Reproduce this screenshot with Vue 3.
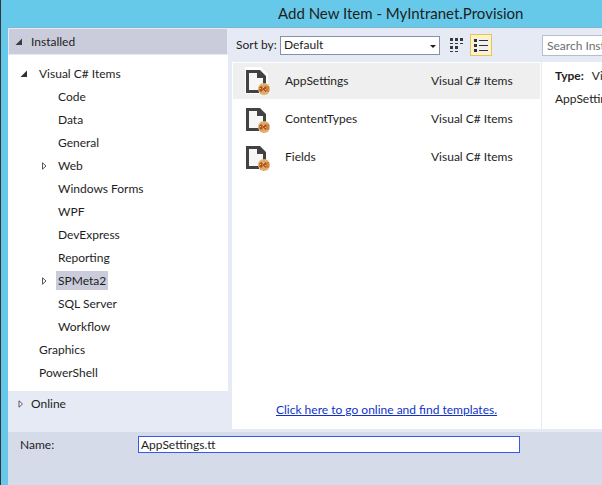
<script setup>
import { ref } from 'vue'

const categories = [
  { name: 'Visual C# Items', level: 1, state: 'open' },
  { name: 'Code', level: 2 },
  { name: 'Data', level: 2 },
  { name: 'General', level: 2 },
  { name: 'Web', level: 2, state: 'closed' },
  { name: 'Windows Forms', level: 2 },
  { name: 'WPF', level: 2 },
  { name: 'DevExpress', level: 2 },
  { name: 'Reporting', level: 2 },
  { name: 'SPMeta2', level: 2, state: 'closed' },
  { name: 'SQL Server', level: 2 },
  { name: 'Workflow', level: 2 },
  { name: 'Graphics', level: 1 },
  { name: 'PowerShell', level: 1 },
]
const templates = ['AppSettings', 'ContentTypes', 'Fields']

const category = ref('SPMeta2')
const template = ref('AppSettings')
const sort = ref('Default')
const search = ref('')
const fileName = ref('AppSettings.tt')
</script>

<template>
  <div class="dialog">
    <header class="title"><h1>Add New Item - MyIntranet.Provision</h1></header>

    <main class="body">
      <nav class="side">
        <button class="group installed" type="button">
          <svg class="arrow" width="8" height="8" viewBox="0 0 8 8"><path d="M7 0.5V7H0.5Z" fill="#3c3c40" /></svg>
          <span>Installed</span>
        </button>
        <ul class="tree">
          <li v-for="c in categories" :key="c.name" :class="'level' + c.level">
            <span class="toggle">
              <svg v-if="c.state === 'open'" width="8" height="8" viewBox="0 0 8 8"><path d="M7 0.5V7H0.5Z" fill="#303034" /></svg>
              <svg v-else-if="c.state === 'closed'" width="8" height="8" viewBox="0 0 8 8"><path d="M3.5 0.8V7.2L7 4Z" fill="#fff" stroke="#55555a" /></svg>
            </span>
            <button type="button" class="node" :class="{ selected: c.name === category }" @click="category = c.name">{{ c.name }}</button>
          </li>
        </ul>
        <button class="group online" type="button">
          <svg class="arrow" width="8" height="8" viewBox="0 0 8 8"><path d="M4 0.8V7.2L7.5 4Z" fill="#fff" stroke="#55555a" /></svg>
          <span>Online</span>
        </button>
      </nav>

      <section class="content">
        <div class="toolbar">
          <div class="sorting">
            <label for="sort">Sort by:</label>
            <span class="combo">
              <select id="sort" v-model="sort">
                <option>Default</option>
                <option>Name Ascending</option>
                <option>Name Descending</option>
              </select>
              <svg class="caret" width="6" height="3" viewBox="0 0 6 3"><path d="M0 0H6L3 3Z" fill="#1e1e1e" /></svg>
            </span>
            <button type="button" class="view" aria-label="Small icons">
              <svg width="14" height="14" viewBox="0 0 14 14" fill="#38383c" shape-rendering="crispEdges">
                <path d="M0 0h3v3h-3zM5 0h3v3h-3zM10 0h3v3h-3zM0 5h3v1h-3zM5 5h3v1h-3zM10 5h3v1h-3zM0 8h3v3h-3zM5 8h3v3h-3zM0 13h3v1h-3zM5 13h3v1h-3z" />
              </svg>
            </button>
            <button type="button" class="view active" aria-label="Medium icons">
              <svg width="16" height="15" viewBox="0 0 16 15" shape-rendering="crispEdges">
                <path d="M0 0h16v15h-16z" fill="#f1f0ec" />
                <path d="M1 1h3v3h-3zM6 2h9v1h-9zM1 6h3v3h-3zM6 7h9v1h-9zM1 11h3v3h-3zM6 12h9v1h-9z" fill="#303034" />
              </svg>
            </button>
          </div>
          <input v-model="search" class="search" type="text" aria-label="Search" placeholder="Search Installed Templates (Ctrl+E)" />
        </div>

        <div class="panes">
          <div class="list">
            <ul class="items">
              <li v-for="t in templates" :key="t">
                <button type="button" class="item" :class="{ selected: t === template }" @click="template = t">
                  <svg width="26" height="28" viewBox="0 0 26 28">
                    <path d="M0 0H16L23 7V27H0Z" fill="#fff" />
                    <path d="M3 5H13V12H19V24H3Z" fill="#f6f6f6" />
                    <path d="M1 3H15L21 9V17H18V11H12V6H4V23H14V26H1Z" fill="#424242" />
                    <circle cx="19" cy="22" r="6" fill="#dfa865" />
                    <circle cx="19" cy="22" r="5" fill="none" stroke="#efcf9b" stroke-dasharray="1 2" />
                    <path d="M15 20h2v4h-2zM18 22l3-2.500v5z" fill="#b65b24" stroke="#a84c1c" />
                    <path d="M15 21h1v1h-1zM18 20h1v1h-1zM20 22h1v1h-1z" fill="#efbd78" />
                    <path d="M23 19v6" stroke="#b65b24" />
                  </svg>
                  <span class="name">{{ t }}</span>
                  <span class="kind">Visual C# Items</span>
                </button>
              </li>
            </ul>
            <a class="more" href="#online">Click here to go online and find templates.</a>
          </div>
          <aside class="details">
            <p><b>Type:</b>Visual C# Items</p>
            <p>AppSettings</p>
          </aside>
        </div>
      </section>
    </main>

    <footer class="footer">
      <label for="name">Name:</label>
      <input id="name" v-model="fileName" type="text" />
    </footer>
  </div>
</template>

<style>
body {
  margin: 0;
  overflow: hidden;
}
</style>

<style scoped>
* {
  box-sizing: border-box;
}
.dialog {
  display: flex;
  flex-direction: column;
  min-height: 100vh;
  overflow: hidden;
  border-left: 1px solid #35353b;
  padding-left: 7px;
  background: #66c9ea;
  color: #1e1e1e;
  font: 12px/16px Lato, "Open Sans", sans-serif;
  white-space: nowrap;
}
button,
input,
select {
  margin: 0;
  border: 0;
  padding: 0;
  border-radius: 0;
  background: none;
  color: inherit;
  font: inherit;
  outline: none;
}
svg {
  display: block;
  flex: none;
}
ul {
  margin: 0;
  padding: 0;
  list-style: none;
}
.title {
  height: 28px;
  padding-left: 270px;
  border-bottom: 1px solid #7fb4d2;
}
h1 {
  margin: 0;
  font-size: 15px;
  font-weight: 400;
  line-height: 26px;
}
.body {
  display: grid;
  grid-template-columns: 220px minmax(0, 1fr);
  flex: 1;
  background: #e6eaf5;
}
.side {
  display: flex;
  flex-direction: column;
}
.group {
  display: flex;
  align-items: center;
  gap: 8px;
  text-align: left;
}
.installed {
  height: 27px;
  padding-left: 6px;
  border: 1px solid #e6eaf5;
  background: #cbccdb;
}
.online {
  height: 26px;
  padding-left: 7px;
}
.tree {
  padding: 7px 0;
  background: #fff;
}
.tree li {
  display: flex;
  align-items: center;
  height: 23px;
}
.level1 {
  padding-left: 12px;
}
.level2 {
  padding-left: 31px;
}
.toggle {
  width: 17px;
}
.node {
  height: 19px;
  padding: 0 2px;
}
.node.selected {
  background: #cbccdb;
}
.content {
  display: flex;
  flex-direction: column;
  padding: 0 0 3px 4px;
}
.toolbar {
  display: grid;
  grid-template-columns: 310px minmax(0, 1fr);
  align-items: center;
  height: 34px;
}
.sorting {
  display: flex;
  align-items: center;
  padding-left: 4px;
}
.sorting label {
  width: 44px;
}
.combo {
  display: flex;
  position: relative;
  width: 160px;
}
.combo select {
  width: 100%;
  height: 19px;
  padding-left: 3px;
  border: 1px solid #8591a9;
  background: #fff;
  appearance: none;
}
.caret {
  position: absolute;
  top: 9px;
  right: 4px;
  pointer-events: none;
}
.view {
  display: grid;
  place-items: center;
  width: 22px;
  height: 22px;
  margin-left: 6px;
}
.view.active {
  margin-left: 2px;
  border: 1px solid #e5c365;
  background: #fff3bc;
}
.search {
  width: 240px;
  height: 21px;
  padding: 0 4px;
  border: 1px solid #b6bdcd;
  background: #fff;
}
.search::placeholder {
  color: #6d6d70;
  opacity: 1;
}
.panes {
  display: grid;
  grid-template-columns: 310px minmax(0, 1fr);
  flex: 1;
}
.list {
  display: flex;
  flex-direction: column;
  align-items: center;
  justify-content: space-between;
  padding: 1px 1px 11px;
  border-right: 1px solid #e6eaf5;
  background: #fff;
}
.items {
  display: grid;
  gap: 2px;
  width: 100%;
}
.item {
  display: grid;
  grid-template-columns: 40px 146px 1fr;
  align-items: center;
  width: 100%;
  height: 36px;
  padding-left: 12px;
  text-align: left;
}
.item.selected {
  background: #efefef;
}
.more {
  color: #0e32c8;
}
.details {
  overflow: hidden;
  padding: 6px 13px;
  background: #fff;
}
.details p {
  margin: 0 0 7px;
}
.details b {
  margin-right: 8px;
}
.footer {
  display: flex;
  align-items: flex-start;
  height: 53px;
  padding: 4px 82px 0 12px;
  background: #d5dbe9;
}
.footer label {
  width: 118px;
  line-height: 18px;
}
.footer input {
  flex: 1;
  min-width: 0;
  height: 17px;
  padding: 0 2px;
  border: 1px solid #3459ee;
  background: #fff;
}
</style>
